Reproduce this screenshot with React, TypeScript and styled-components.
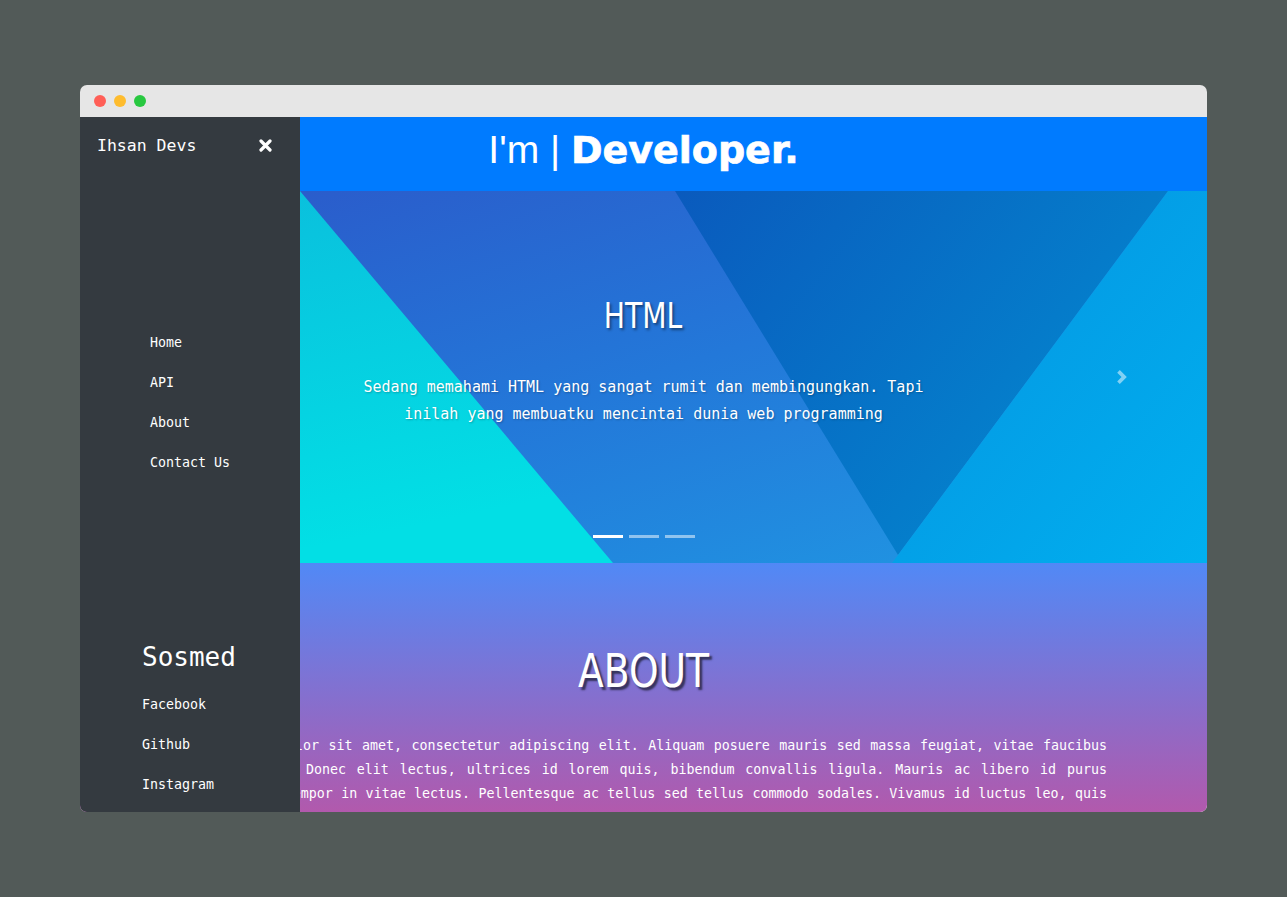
import React from "react";
import styled, { createGlobalStyle } from "styled-components";

const GlobalStyle = createGlobalStyle`
  html, body { margin: 0; padding: 0; height: 100%; }
  body {
    background: #525a58;
    font-family: "DejaVu Sans Mono", "Liberation Mono", monospace;
  }
  * { box-sizing: border-box; }
`;

const Page = styled.div`
  min-height: 100vh;
  display: flex;
  align-items: center;
  justify-content: center;
`;

const Window = styled.div`
  width: 1127px;
  height: 727px;
  border-radius: 7px;
  overflow: hidden;
  display: flex;
  flex-direction: column;
`;

const TitleBar = styled.div`
  height: 32px;
  flex: none;
  background: #e6e6e6;
  display: flex;
  align-items: center;
  padding-left: 14px;
  gap: 8px;
`;

const Light = styled.span<{ $c: string }>`
  width: 12px;
  height: 12px;
  border-radius: 50%;
  background: ${(p) => p.$c};
`;

const Viewport = styled.div`
  position: relative;
  flex: 1;
  overflow: hidden;
  background: #ffffff;
`;

const Main = styled.main`
  display: flex;
  flex-direction: column;
`;

const Header = styled.header`
  height: 74px;
  background: #007bff;
  display: flex;
  align-items: center;
  justify-content: center;
  padding-bottom: 10px;
  color: #fff;
`;

const Title = styled.h1`
  margin: 0;
  line-height: 1;
  font-weight: 400;
`;

const Lead = styled.span`
  font-family: "Liberation Sans", Arial, sans-serif;
  font-size: 39px;
  font-weight: 400;
  white-space: pre;
`;

const Strong = styled.span`
  font-family: "DejaVu Sans", sans-serif;
  font-size: 38px;
  font-weight: 700;
  -webkit-text-stroke: 0.7px #fff;
`;

const Carousel = styled.section`
  position: relative;
  height: 372px;
  display: grid;
  overflow: hidden;
  & > * {
    grid-area: 1 / 1;
  }
`;

const Art = styled.svg`
  width: 100%;
  height: 100%;
  display: block;
`;

const Caption = styled.div`
  display: flex;
  flex-direction: column;
  align-items: center;
  padding-top: 103px;
  padding-bottom: 25px;
  color: #fff;
  text-align: center;
`;

const SlideTitle = styled.h2`
  margin: 0;
  display: inline-block;
  font-family: "Liberation Sans Narrow", "DejaVu Sans Condensed", "Liberation Sans", sans-serif;
  font-stretch: condensed;
  font-weight: 400;
  font-size: 36px;
  line-height: 1.2;
  transform: scaleX(0.87);
  text-shadow: 2px 2px 3px rgba(0, 0, 0, 0.45);
`;

const SlideText = styled.p`
  margin: 37px 0 0;
  max-width: 590px;
  font-family: "DejaVu Sans Mono", monospace;
  font-size: 15px;
  line-height: 27px;
  text-shadow: 1px 1px 2px rgba(0, 0, 0, 0.25);
`;

const Indicators = styled.div`
  margin-top: auto;
  display: flex;
  gap: 6px;
`;

const Indicator = styled.span<{ $active?: boolean }>`
  width: 30px;
  height: 3px;
  background: ${(p) => (p.$active ? "#ffffff" : "rgba(255,255,255,0.5)")};
`;

const NextControl = styled.div`
  position: absolute;
  right: 0;
  top: 0;
  bottom: 0;
  width: 15%;
  display: flex;
  align-items: center;
  justify-content: center;
  opacity: 0.5;
`;

const About = styled.section`
  min-height: 460px;
  background: linear-gradient(180deg, #5189f6 0px, #b259ac 250px, #d9509c 460px);
  padding: 80px 100px 0;
  color: #fff;
  text-align: center;
`;

const AboutTitle = styled.h2`
  margin: 0;
  display: inline-block;
  font-family: "Liberation Sans Narrow", "DejaVu Sans Condensed", "Liberation Sans", sans-serif;
  font-stretch: condensed;
  font-weight: 400;
  font-size: 47px;
  line-height: 1.2;
  transform: scaleX(0.89);
  text-shadow: 3px 3px 2px rgba(30, 30, 50, 0.75);
`;

const AboutText = styled.p`
  margin: 35px 0 0;
  font-family: "DejaVu Sans Mono", monospace;
  font-size: 13.3px;
  line-height: 24px;
  text-align: justify;
  text-align-last: justify;
`;

const Sidebar = styled.aside`
  position: absolute;
  top: 0;
  left: 0;
  bottom: 0;
  width: 220px;
  background: #343a40;
  display: flex;
  flex-direction: column;
  color: #fff;
  z-index: 2;
`;

const SideTop = styled.div`
  height: 56px;
  display: flex;
  align-items: center;
  justify-content: space-between;
  padding: 0 28px 0 17px;
`;

const Brand = styled.span`
  font-family: "DejaVu Sans Mono", monospace;
  font-size: 16.5px;
`;

const CloseBtn = styled.span`
  display: flex;
  width: 14px;
  height: 14px;
  align-items: center;
  justify-content: center;
`;

const NavList = styled.ul`
  list-style: none;
  margin: 149px 0 0;
  padding: 0 0 0 70px;
`;

const NavItem = styled.li`
  height: 40px;
  display: flex;
  align-items: center;
  font-family: "DejaVu Sans Mono", monospace;
  font-size: 13.3px;
`;

const Sosmed = styled.div`
  margin-top: auto;
  padding: 0 0 8px 62px;
`;

const SosmedTitle = styled.h3`
  margin: 0 0 7px;
  height: 40px;
  display: flex;
  align-items: center;
  font-family: "DejaVu Sans Mono", monospace;
  font-size: 26px;
  font-weight: 400;
`;

const SosList = styled.ul`
  list-style: none;
  margin: 0;
  padding: 0;
`;

const CarouselArt = () => (
  <Art viewBox="0 0 1127 372" preserveAspectRatio="none">
    <defs>
      <linearGradient id="mid" x1="0" y1="0" x2="1" y2="1">
        <stop offset="0" stopColor="#2c56c8" />
        <stop offset="0.5" stopColor="#2378d9" />
        <stop offset="1" stopColor="#1f9be4" />
      </linearGradient>
      <linearGradient id="cyan" x1="0" y1="0" x2="0.3" y2="1">
        <stop offset="0" stopColor="#0bbcdc" />
        <stop offset="1" stopColor="#02dfe5" />
      </linearGradient>
      <linearGradient id="dark" x1="0" y1="0" x2="1" y2="0.6">
        <stop offset="0" stopColor="#0a5abd" />
        <stop offset="1" stopColor="#0388cf" />
      </linearGradient>
      <linearGradient id="right" x1="0" y1="0" x2="1" y2="1">
        <stop offset="0" stopColor="#0691e0" />
        <stop offset="1" stopColor="#00b0ef" />
      </linearGradient>
    </defs>
    <rect x="0" y="0" width="1127" height="372" fill="url(#mid)" />
    <polygon points="0,0 220,0 533,372 0,372" fill="url(#cyan)" />
    <polygon points="595,0 1088,0 818,364" fill="url(#dark)" />
    <polygon points="1088,0 1127,0 1127,372 812,372 818,364" fill="url(#right)" />
  </Art>
);

const aboutText =
  "Lorem ipsum dolor sit amet, consectetur adipiscing elit. Aliquam posuere mauris sed massa feugiat, vitae faucibus nibh pharetra. Donec elit lectus, ultrices id lorem quis, bibendum convallis ligula. Mauris ac libero id purus consequat at tempor in vitae lectus. Pellentesque ac tellus sed tellus commodo sodales. Vivamus id luctus leo, quis";

export default function App() {
  return (
    <>
      <GlobalStyle />
      <Page>
        <Window>
          <TitleBar>
            <Light $c="#ff5f57" />
            <Light $c="#febc2e" />
            <Light $c="#28c840" />
          </TitleBar>
          <Viewport>
            <Main>
              <Header>
                <Title>
                  <Lead>I'm | </Lead>
                  <Strong>Developer.</Strong>
                </Title>
              </Header>
              <Carousel>
                <CarouselArt />
                <Caption>
                  <SlideTitle>HTML</SlideTitle>
                  <SlideText>
                    Sedang memahami HTML yang sangat rumit dan membingungkan. Tapi inilah yang
                    membuatku mencintai dunia web programming
                  </SlideText>
                  <Indicators>
                    <Indicator $active />
                    <Indicator />
                    <Indicator />
                  </Indicators>
                </Caption>
                <NextControl>
                  <svg width="14" height="14" viewBox="0 0 8 8">
                    <path fill="#fff" d="M2.75 0l-1.5 1.5L3.75 4l-2.5 2.5L2.75 8l4-4-4-4z" />
                  </svg>
                </NextControl>
              </Carousel>
              <About>
                <AboutTitle>ABOUT</AboutTitle>
                <AboutText>{aboutText}</AboutText>
              </About>
            </Main>
            <Sidebar>
              <SideTop>
                <Brand>Ihsan Devs</Brand>
                <CloseBtn>
                  <svg width="13" height="13" viewBox="0 0 13 13">
                    <path
                      d="M2 2 L11 11 M11 2 L2 11"
                      stroke="#fff"
                      strokeWidth="3.2"
                      strokeLinecap="round"
                    />
                  </svg>
                </CloseBtn>
              </SideTop>
              <NavList>
                <NavItem>Home</NavItem>
                <NavItem>API</NavItem>
                <NavItem>About</NavItem>
                <NavItem>Contact Us</NavItem>
              </NavList>
              <Sosmed>
                <SosmedTitle>Sosmed</SosmedTitle>
                <SosList>
                  <NavItem>Facebook</NavItem>
                  <NavItem>Github</NavItem>
                  <NavItem>Instagram</NavItem>
                </SosList>
              </Sosmed>
            </Sidebar>
          </Viewport>
        </Window>
      </Page>
    </>
  );
}
